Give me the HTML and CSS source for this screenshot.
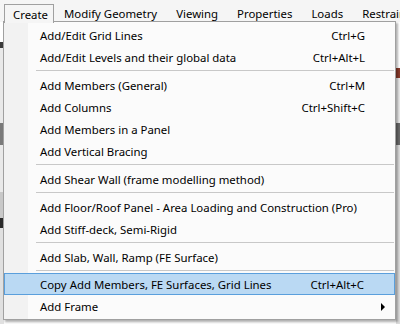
FILE: index.html
```html
<!DOCTYPE html>
<html lang="en">
<head>
    <meta charset="UTF-8">
    <title>Create menu</title>
    <link rel="stylesheet" href="styles.css">
</head>
<body>

    <div class="app">
        <div class="menubar">
            <div class="menubar-item open">Create</div>
            <div class="menubar-item">Modify Geometry</div>
            <div class="menubar-item">Viewing</div>
            <div class="menubar-item">Properties</div>
            <div class="menubar-item">Loads</div>
            <div class="menubar-item">Restraints</div>
        </div>

        <div class="edge edge-left"></div>
        <div class="edge edge-right"></div>

        <div class="dropdown">
            <div class="item"><span class="label">Add/Edit Grid Lines</span><span class="key">Ctrl+G</span></div>
            <div class="item"><span class="label">Add/Edit Levels and their global data</span><span class="key">Ctrl+Alt+L</span></div>
            <div class="sep"></div>
            <div class="item"><span class="label">Add Members (General)</span><span class="key">Ctrl+M</span></div>
            <div class="item"><span class="label">Add Columns</span><span class="key">Ctrl+Shift+C</span></div>
            <div class="item"><span class="label">Add Members in a Panel</span></div>
            <div class="item"><span class="label">Add Vertical Bracing</span></div>
            <div class="sep"></div>
            <div class="item"><span class="label">Add Shear Wall (frame modelling method)</span></div>
            <div class="sep"></div>
            <div class="item"><span class="label">Add Floor/Roof Panel - Area Loading and Construction (Pro)</span></div>
            <div class="item"><span class="label">Add Stiff-deck, Semi-Rigid</span></div>
            <div class="sep"></div>
            <div class="item"><span class="label">Add Slab, Wall, Ramp (FE Surface)</span></div>
            <div class="sep short"></div>
            <div class="item active"><span class="label">Copy Add Members, FE Surfaces, Grid Lines</span><span class="key">Ctrl+Alt+C</span></div>
            <div class="item"><span class="label">Add Frame</span><span class="arrow"></span></div>
        </div>
    </div>

</body>
</html>
```

FILE: styles.css
```css
body {
    margin: 0;
    font-family: "Noto Sans", "Open Sans", sans-serif;
    font-size: 11.4px;
    color: #000;
    background-color: #fbfbfb;
}

.app {
    position: relative;
    width: 400px;
    height: 324px;
    overflow: hidden;
}

.menubar {
    display: flex;
    height: 22px;
    padding-left: 4px;
    background-color: #f5f5f5;
    box-sizing: border-box;
}

.menubar-item {
    padding: 0 9px 0 10px;
    height: 18px;
    margin-top: 4px;
    line-height: 19px;
    white-space: nowrap;
}

.menubar-item.open {
    position: relative;
    z-index: 2;
    padding: 0 8px 0 8px;
    border: 1px solid #a0a0a0;
    border-bottom: none;
    background-color: #f5f5f5;
    height: 18px;
    width: 32px;
}

/* bits of the window behind the menu */
.edge {
    position: absolute;
    top: 22px;
    width: 4px;
    height: 302px;
}

.edge-left {
    left: 0;
    background: linear-gradient(#ffffff 0, #ffffff 20px, #3a3a3a 20px, #3a3a3a 26px, #e9e9e9 26px,
        #e9e9e9 101px, #7a7a7a 101px, #7a7a7a 123px, #e9e9e9 123px, #e9e9e9 170px,
        #c8c8c8 170px, #c8c8c8 196px, #2a2a2a 196px, #2a2a2a 206px, #e0e0e0 206px);
}

.edge-right {
    right: 0;
    background: linear-gradient(#ffffff 0, #ffffff 46px, #8a3a2a 46px, #8a3a2a 56px, #e9e9e9 56px,
        #e9e9e9 101px, #6a6a6a 101px, #6a6a6a 123px, #dcdcdc 123px);
}

.dropdown {
    position: absolute;
    top: 21px;
    left: 3px;
    z-index: 1;
    width: 391px;
    padding: 2px 0;
    border: 1px solid #a0a0a0;
    background: linear-gradient(to right, #f2f2f2 0, #f2f2f2 24px, #fbfbfb 24px);
    box-shadow: 2px 2px 2px rgba(0, 0, 0, 0.3);
}

.item {
    display: flex;
    align-items: center;
    height: 22px;
    margin: 0 1px;
    padding: 1px 29px 0 35px;
    white-space: nowrap;
    box-sizing: border-box;
}

.item .label {
    flex: 1;
}

.item.active {
    background-color: #bad9f3;
    border: 1px solid #5a9fdc;
    margin: 0;
    padding-left: 35px;
    padding-right: 30px;
}

.arrow {
    width: 0;
    height: 0;
    margin-right: -20px;
    border-top: 4px solid transparent;
    border-bottom: 4px solid transparent;
    border-left: 4px solid #000;
}

.sep {
    height: 6px;
    margin-left: 32px;
    margin-right: 1px;
    background: linear-gradient(#fbfbfb 2px, #c8c8c8 2px, #c8c8c8 3px, #fbfbfb 3px);
}

.sep.short {
    height: 5px;
}
```
